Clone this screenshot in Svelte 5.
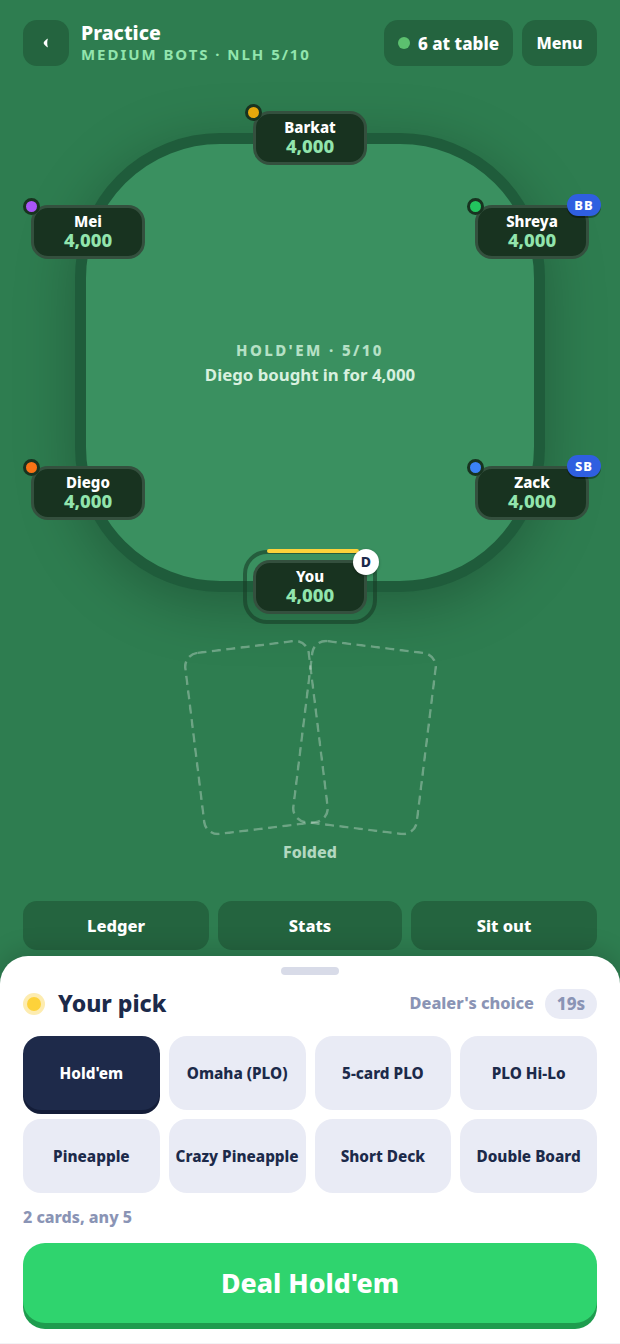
<script lang="ts">
  const seats = [
    { name: 'Barkat', cls: 'top', dot: '#e6a80c' },
    { name: 'Mei', cls: 'upper-left', dot: '#a855f7' },
    { name: 'Shreya', cls: 'upper-right', dot: '#22c55e', badge: 'BB' },
    { name: 'Diego', cls: 'lower-left', dot: '#f97316' },
    { name: 'Zack', cls: 'lower-right', dot: '#3b82f6', badge: 'SB' }
  ];
  const games = [
    "Hold'em", 'Omaha (PLO)', '5-card PLO', 'PLO Hi-Lo',
    'Pineapple', 'Crazy Pineapple', 'Short Deck', 'Double Board'
  ];
  let picked = "Hold'em";
</script>

<main class="page">
  <header class="topbar">
    <button class="back" aria-label="Back">
      <svg width="6" height="10" viewBox="0 0 6 10"><path d="M5 0.5 C2.5 1.8 1 3.4 0.6 5 C1 6.6 2.5 8.2 5 9.5 C4 7.5 4 2.5 5 0.5Z" fill="#fff" /></svg>
    </button>
    <div class="title">
      <strong>Practice</strong>
      <span>MEDIUM BOTS · NLH 5/10</span>
    </div>
    <div class="pill count"><i></i>6 at table</div>
    <button class="pill menu">Menu</button>
  </header>

  <section class="felt">
    <div class="table">
      <div class="label">HOLD'EM · 5/10</div>
      <div class="log">Diego bought in for 4,000</div>
    </div>

    {#each seats as seat}
      <div class="seat {seat.cls}">
        <i class="dot" style="background: {seat.dot}"></i>
        <b>{seat.name}</b>
        <em>4,000</em>
        {#if seat.badge}<span class="badge">{seat.badge}</span>{/if}
      </div>
    {/each}

    <div class="ring"></div>
    <div class="turn"></div>
    <div class="seat hero">
      <b>You</b>
      <em>4,000</em>
      <span class="dealer">D</span>
    </div>
  </section>

  <div class="hole">
    <svg class="card left" viewBox="0 0 127 185"><rect x="1.25" y="1.25" width="124.5" height="182.5" rx="14" /></svg>
    <svg class="card right" viewBox="0 0 127 185"><rect x="1.25" y="1.25" width="124.5" height="182.5" rx="14" /></svg>
  </div>
  <div class="folded">Folded</div>

  <nav class="actions">
    <button>Ledger</button>
    <button>Stats</button>
    <button>Sit out</button>
  </nav>

  <section class="sheet">
    <div class="handle"></div>
    <div class="sheet-head">
      <i class="pulse"></i>
      <h2>Your pick</h2>
      <span class="choice">Dealer's choice</span>
      <span class="timer">19s</span>
    </div>
    <div class="games">
      {#each games as game}
        <button class:active={game === picked}>{game}</button>
      {/each}
    </div>
    <p class="hint">2 cards, any 5</p>
    <button class="deal">Deal Hold'em</button>
  </section>
</main>

<style>
  :global(body) {
    margin: 0;
    background: #2e7d50;
    font-family: 'Noto Sans', Lato, sans-serif;
  }

  button {
    border: 0;
    font-family: inherit;
    cursor: pointer;
  }

  .page {
    width: 620px;
    height: 1344px;
    overflow: hidden;
    display: flex;
    flex-direction: column;
    background: #2e7d50;
  }

  .topbar {
    display: flex;
    align-items: center;
    height: 46px;
    padding: 20px 23px 0;
  }

  .back {
    width: 46px;
    height: 46px;
    border-radius: 14px;
    background: #24643f;
    display: flex;
    align-items: center;
    justify-content: center;
    padding: 0;
  }

  .title {
    flex: 1;
    margin-left: 12px;
    display: flex;
    flex-direction: column;
  }

  .title strong {
    color: #fff;
    font-size: 19.5px;
    line-height: 25px;
    font-weight: 800;
    margin-top: -3px;
  }

  .title span {
    color: #92e5ad;
    font-size: 15px;
    line-height: 18px;
    font-weight: 700;
    letter-spacing: 1.95px;
  }

  .pill {
    height: 46px;
    border-radius: 14px;
    background: #24643f;
    color: #fff;
    font-size: 16px;
    font-weight: 800;
    display: flex;
    align-items: center;
    box-sizing: border-box;
  }

  .count {
    width: 129px;
    padding-left: 14px;
    margin-right: 9px;
    font-size: 17px;
  }

  .count i {
    width: 12px;
    height: 12px;
    border-radius: 50%;
    background: #5cc06f;
    margin-right: 8px;
  }

  .menu {
    width: 75px;
    justify-content: center;
  }

  .felt {
    position: relative;
    padding: 67px 75px 0;
  }

  .table {
    height: 437px;
    border: 11px solid #1f5c3b;
    border-radius: 145px;
    background: #3a9060;
    box-shadow: 0 12px 60px rgba(0, 0, 0, 0.25);
    display: flex;
    flex-direction: column;
    align-items: center;
    justify-content: center;
  }

  .label {
    margin-top: 1px;
    color: #b5e0c5;
    font-size: 15px;
    line-height: 20px;
    font-weight: 800;
    letter-spacing: 2.4px;
  }

  .log {
    margin-top: 4px;
    color: #d8f0df;
    font-size: 16.8px;
    line-height: 22px;
    font-weight: 700;
  }

  .seat {
    position: absolute;
    width: 114px;
    height: 54px;
    box-sizing: border-box;
    border: 3px solid #34503e;
    border-radius: 17px;
    padding-bottom: 1px;
    background: #183320;
    display: flex;
    flex-direction: column;
    align-items: center;
    justify-content: center;
  }

  .seat b {
    color: #fff;
    font-size: 15px;
    line-height: 17px;
    font-weight: 800;
  }

  .seat em {
    color: #92e5ad;
    font-size: 18.5px;
    line-height: 20px;
    font-style: normal;
    font-weight: 800;
  }

  .top { left: 253px; top: 45px; }
  .upper-left { left: 31px; top: 139px; }
  .upper-right { left: 475px; top: 139px; }
  .lower-left { left: 31px; top: 400px; }
  .lower-right { left: 475px; top: 400px; }
  .hero { left: 253px; top: 494px; }

  .dot {
    position: absolute;
    left: -11px;
    top: -10px;
    width: 11px;
    height: 11px;
    border: 3px solid #183320;
    border-radius: 50%;
  }

  .badge {
    position: absolute;
    right: -15px;
    top: -14px;
    width: 34px;
    height: 22px;
    border-radius: 11px;
    background: #2f5fe0;
    box-shadow: 0 2px 0 rgba(0, 0, 0, 0.35);
    color: #fff;
    font-size: 13px;
    line-height: 22px;
    font-weight: 800;
    letter-spacing: 1px;
    text-align: center;
  }

  .ring {
    position: absolute;
    left: 243px;
    top: 484px;
    width: 134px;
    height: 74px;
    box-sizing: border-box;
    border: 4px solid rgba(24, 60, 38, 0.6);
    border-radius: 24px;
  }

  .turn {
    position: absolute;
    left: 267px;
    top: 483px;
    width: 92px;
    height: 4px;
    border-radius: 2px;
    background: #fdd23a;
  }

  .dealer {
    position: absolute;
    right: -15px;
    top: -14px;
    width: 26px;
    height: 26px;
    border-radius: 50%;
    background: #fff;
    box-shadow: 0 1px 3px rgba(0, 0, 0, 0.3);
    color: #1c2a4a;
    font-size: 14px;
    line-height: 26px;
    font-weight: 800;
    text-align: center;
  }

  .hole {
    display: flex;
    justify-content: center;
    margin-top: 53px;
  }

  .card {
    width: 127px;
    height: 185px;
    fill: none;
    stroke: rgba(255, 255, 255, 0.3);
    stroke-width: 2.5;
    stroke-dasharray: 9 5.5;
  }

  .left { transform: rotate(-7deg); margin-right: -19px; }
  .right { transform: rotate(7deg); }

  .folded {
    margin-top: 11px;
    color: #b3d8c0;
    font-size: 16px;
    line-height: 22px;
    font-weight: 800;
    text-align: center;
  }

  .actions {
    display: grid;
    grid-template-columns: 186px 184px 186px;
    gap: 9px;
    margin: 38px 23px 0;
  }

  .actions button {
    height: 49px;
    border-radius: 14px;
    background: #24643f;
    color: #fff;
    font-size: 16.5px;
    font-weight: 800;
  }

  .sheet {
    flex: 1;
    margin-top: 6px;
    padding: 11px 23px 0;
    border-radius: 28px 28px 0 0;
    border-bottom: 1px solid #f3f3f6;
    background: #fff;
    box-shadow: 0 -6px 24px rgba(0, 0, 0, 0.15);
  }

  .handle {
    width: 58px;
    height: 8px;
    margin: 0 auto;
    border-radius: 4px;
    background: #d8dbe8;
  }

  .sheet-head {
    display: flex;
    align-items: center;
    height: 30px;
    margin-top: 14px;
  }

  .pulse {
    width: 14px;
    height: 14px;
    margin: 0 17px 0 4px;
    border-radius: 50%;
    background: #fdd23a;
    box-shadow: 0 0 0 4px #fdecb0;
  }

  h2 {
    flex: 1;
    margin: -2px 0 0;
    color: #1c2a4a;
    font-size: 23px;
    font-weight: 800;
  }

  .choice {
    margin-top: -3px;
    color: #8a94b5;
    font-size: 16.3px;
    font-weight: 800;
  }

  .timer {
    width: 52px;
    height: 30px;
    margin-left: 11px;
    border-radius: 15px;
    background: #e9ebf5;
    color: #8a94b5;
    font-size: 17px;
    line-height: 30px;
    font-weight: 800;
    text-align: center;
  }

  .games {
    display: grid;
    grid-template-columns: repeat(4, 1fr);
    grid-auto-rows: 74px;
    gap: 9px;
    margin-top: 17px;
  }

  .games button {
    padding: 0;
    border-radius: 18px;
    background: #e9ebf5;
    color: #1c2a4a;
    font-size: 15.3px;
    font-weight: 800;
  }

  .games button.active {
    background: #1e2a4a;
    box-shadow: 0 4px 0 #141d38;
    color: #fff;
  }

  .hint {
    margin: 13px 0 0;
    color: #8a94b5;
    font-size: 16px;
    line-height: 22px;
    font-weight: 800;
  }

  .deal {
    display: block;
    width: 100%;
    height: 80px;
    margin-top: 15px;
    padding-bottom: 2px;
    border-radius: 22px;
    background: #2fd46e;
    box-shadow: 0 6px 0 #1e9c4e;
    color: #fff;
    font-size: 26.7px;
    font-weight: 800;
  }
</style>
